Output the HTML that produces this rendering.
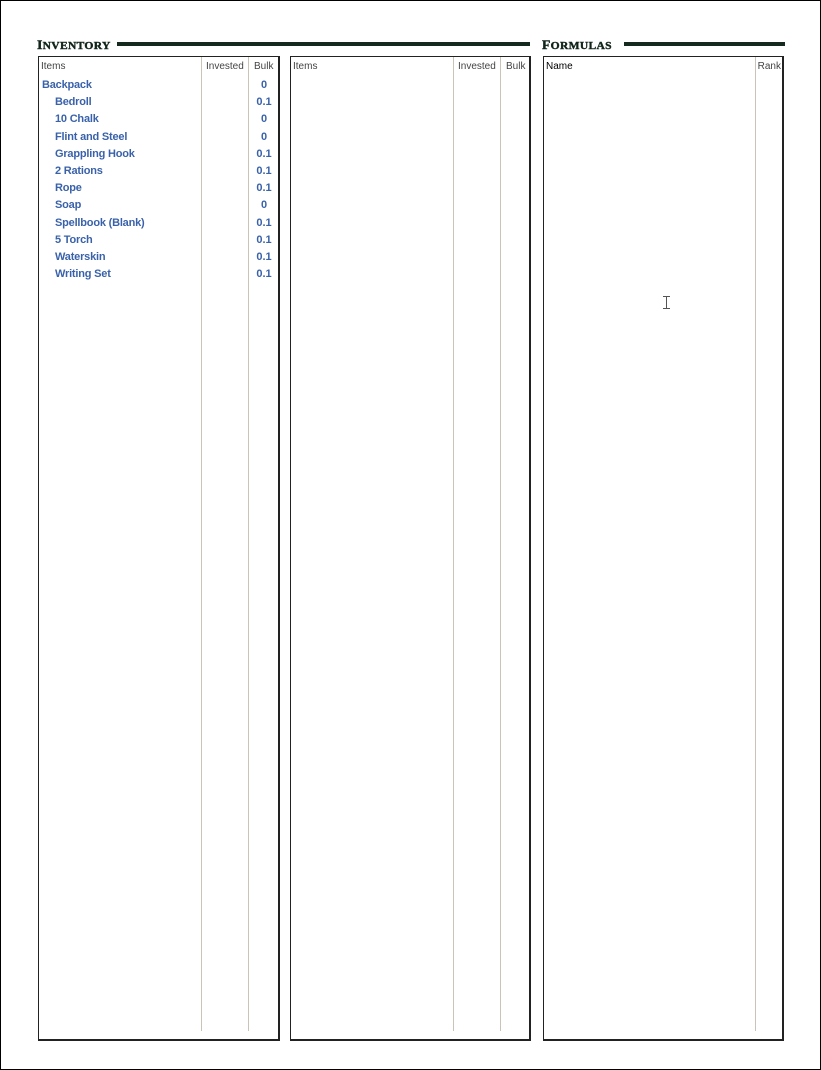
<!DOCTYPE html>
<html><head><style>
*{margin:0;padding:0;box-sizing:border-box}
body{width:821px;height:1070px;background:#fff;position:relative;font-family:"Liberation Sans",sans-serif;overflow:hidden}
.page{position:absolute;left:0;top:0;width:821px;height:1070px;border:1px solid #000}
.title{position:absolute;top:37px;font-family:"Liberation Serif",serif;font-weight:bold;font-size:11px;color:#10241a;letter-spacing:0.3px;font-variant:small-caps;transform:scaleX(1.05);transform-origin:left;-webkit-text-stroke:0.4px #10241a}
.title span{font-size:13px}
.rule{position:absolute;top:42px;height:4px;background:#16291f}
.box{position:absolute;top:56px;height:985px;border:1px solid #222;border-right-width:2px;border-bottom-width:2px}
.vl{position:absolute;top:0;height:974px;width:1px;background:#c9c3b8}
.hd{position:absolute;top:4px;font-size:10px;color:#444}
.it{position:absolute;font-weight:bold;font-size:11px;color:#3a62aa;letter-spacing:-0.2px}
.bk{position:absolute;font-weight:bold;font-size:11px;color:#3a62aa;text-align:center;width:30px}
</style></head><body>
<div class="page"></div>
<div class="title" style="left:37px"><span>I</span>NVENTORY</div>
<div class="rule" style="left:117px;width:413px"></div>
<div class="title" style="left:542px"><span>F</span>ORMULAS</div>
<div class="rule" style="left:624px;width:161px"></div>

<div class="box" style="left:38px;width:242px">
<div class="vl" style="left:162px"></div><div class="vl" style="left:209px"></div>
<div class="hd" style="left:2px">Items</div><div class="hd" style="left:167px">Invested</div><div class="hd" style="left:215px">Bulk</div>
</div>
<div class="box" style="left:290px;width:241px">
<div class="vl" style="left:162px"></div><div class="vl" style="left:209px"></div>
<div class="hd" style="left:2px">Items</div><div class="hd" style="left:167px">Invested</div><div class="hd" style="left:215px">Bulk</div>
</div>
<div class="box" style="left:543px;width:241px">
<div class="vl" style="left:211px"></div>
<div class="hd" style="left:2px;color:#000">Name</div><div class="hd" style="right:1px">Rank</div>
</div>

<div class="it" style="left:42px;top:79px">Backpack</div><div class="bk" style="left:249px;top:79px">0</div>
<div class="it" style="left:55px;top:96px">Bedroll</div><div class="bk" style="left:249px;top:96px">0.1</div>
<div class="it" style="left:55px;top:113px">10 Chalk</div><div class="bk" style="left:249px;top:113px">0</div>
<div class="it" style="left:55px;top:131px">Flint and Steel</div><div class="bk" style="left:249px;top:131px">0</div>
<div class="it" style="left:55px;top:148px">Grappling Hook</div><div class="bk" style="left:249px;top:148px">0.1</div>
<div class="it" style="left:55px;top:165px">2 Rations</div><div class="bk" style="left:249px;top:165px">0.1</div>
<div class="it" style="left:55px;top:182px">Rope</div><div class="bk" style="left:249px;top:182px">0.1</div>
<div class="it" style="left:55px;top:199px">Soap</div><div class="bk" style="left:249px;top:199px">0</div>
<div class="it" style="left:55px;top:217px">Spellbook (Blank)</div><div class="bk" style="left:249px;top:217px">0.1</div>
<div class="it" style="left:55px;top:234px">5 Torch</div><div class="bk" style="left:249px;top:234px">0.1</div>
<div class="it" style="left:55px;top:251px">Waterskin</div><div class="bk" style="left:249px;top:251px">0.1</div>
<div class="it" style="left:55px;top:268px">Writing Set</div><div class="bk" style="left:249px;top:268px">0.1</div>
<div style="position:absolute;left:666px;top:296px;width:1px;height:13px;background:#555"></div>
<div style="position:absolute;left:663px;top:296px;width:7px;height:1px;background:#555"></div>
<div style="position:absolute;left:663px;top:308px;width:7px;height:1px;background:#555"></div>
</body></html>
